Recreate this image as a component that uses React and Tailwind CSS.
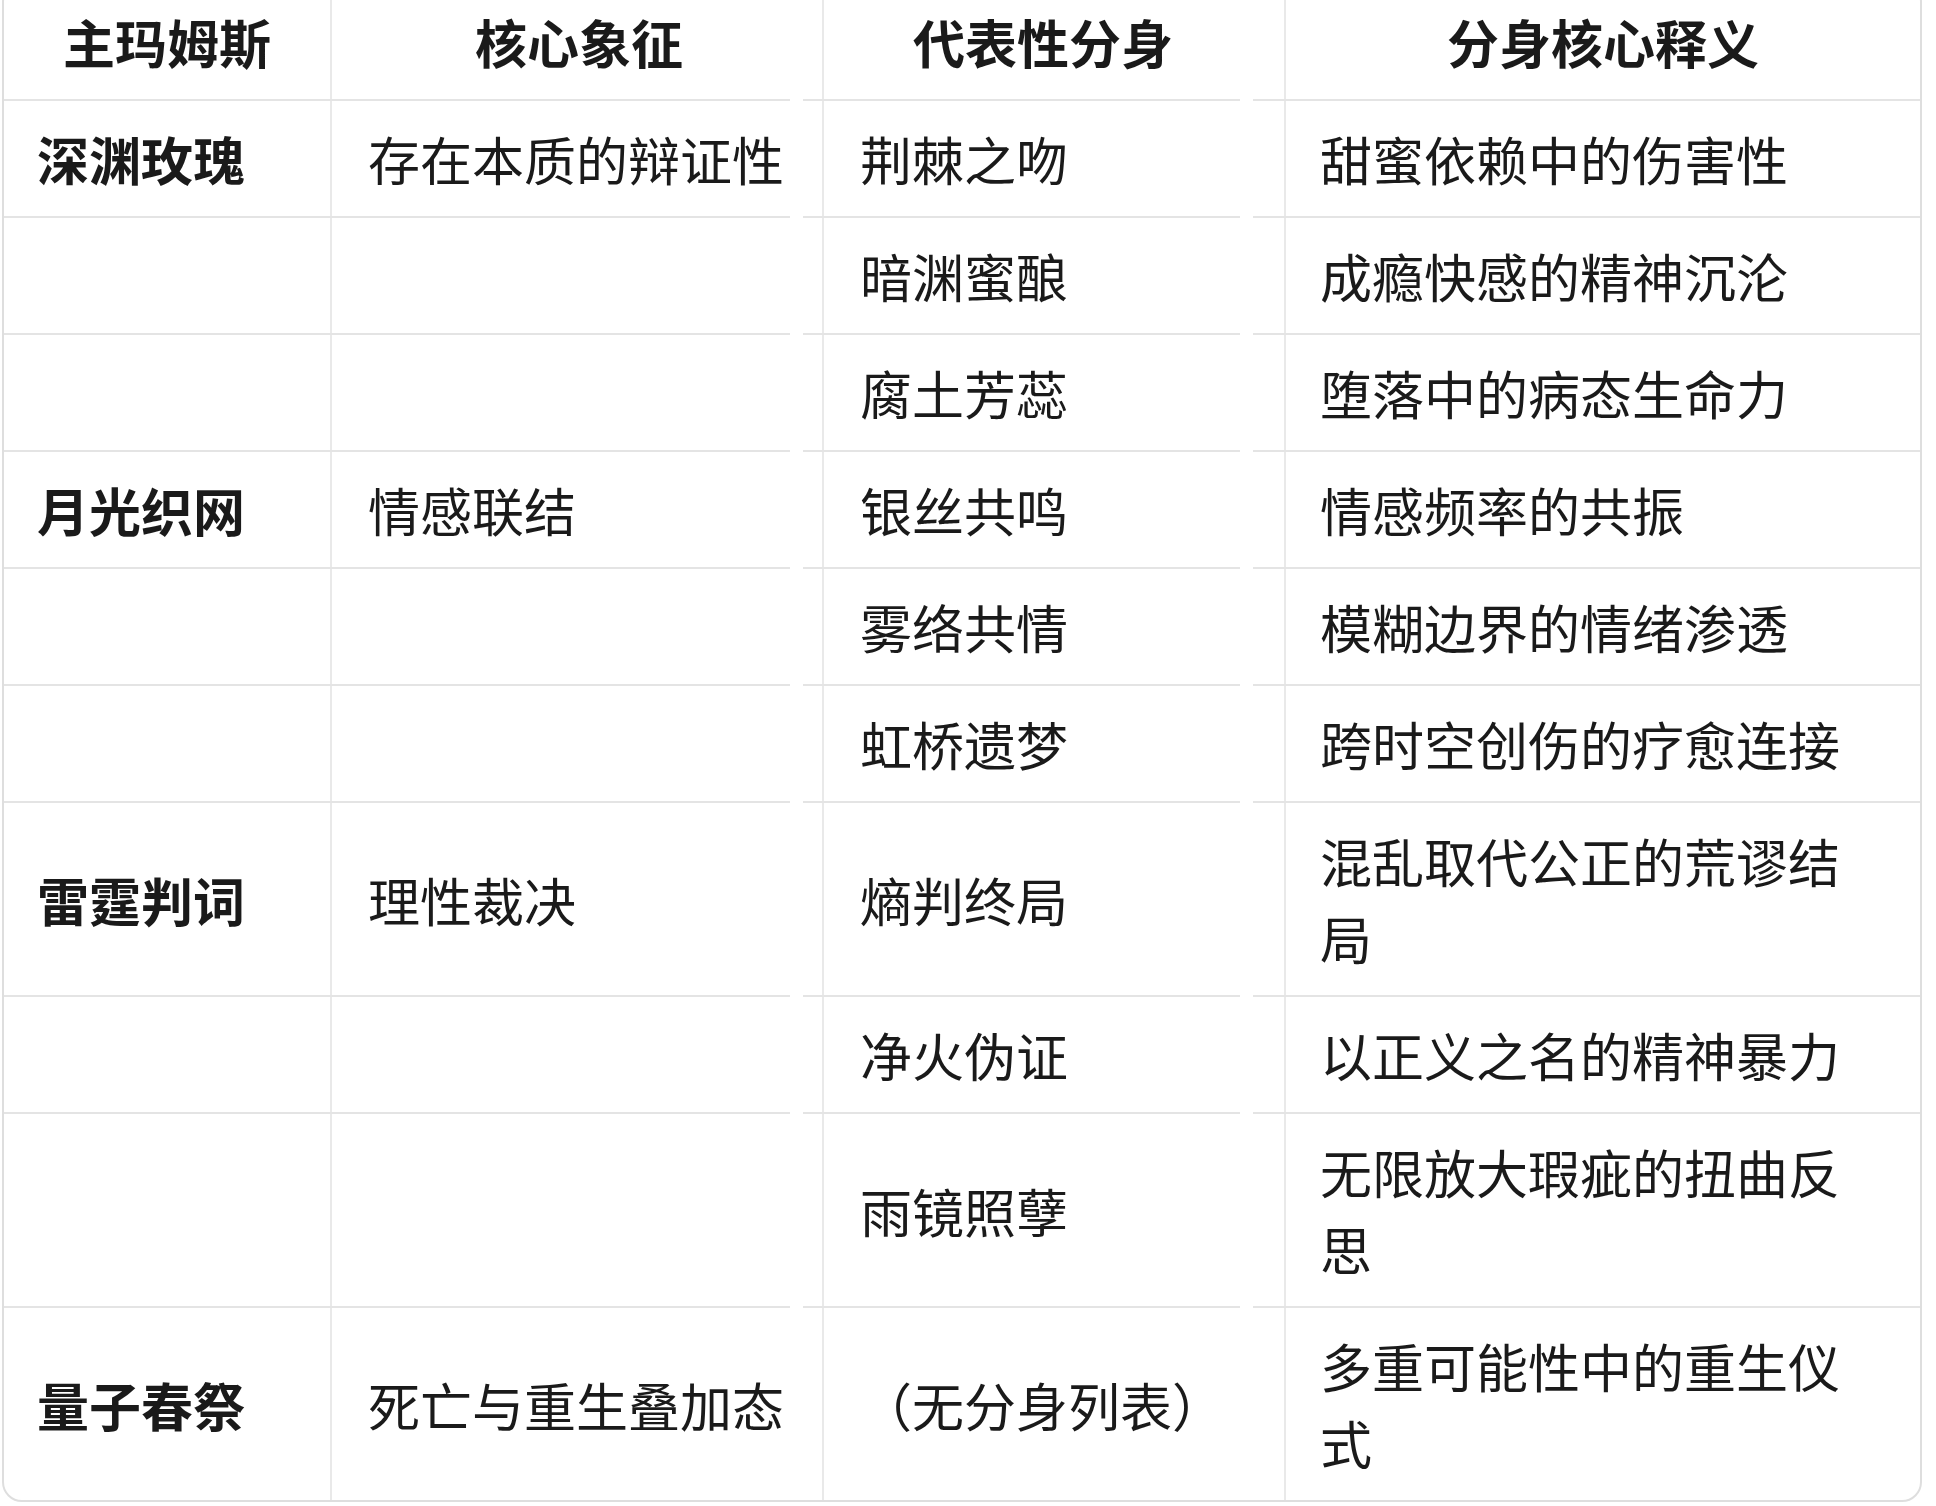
import React from 'react';

const rows = [
  ['深渊玫瑰', '存在本质的辩证性', '荆棘之吻', '甜蜜依赖中的伤害性'],
  ['', '', '暗渊蜜酿', '成瘾快感的精神沉沦'],
  ['', '', '腐土芳蕊', '堕落中的病态生命力'],
  ['月光织网', '情感联结', '银丝共鸣', '情感频率的共振'],
  ['', '', '雾络共情', '模糊边界的情绪渗透'],
  ['', '', '虹桥遗梦', '跨时空创伤的疗愈连接'],
  ['雷霆判词', '理性裁决', '熵判终局', '混乱取代公正的荒谬结局'],
  ['', '', '净火伪证', '以正义之名的精神暴力'],
  ['', '', '雨镜照孽', '无限放大瑕疵的扭曲反思'],
  ['量子春祭', '死亡与重生叠加态', '（无分身列表）', '多重可能性中的重生仪式'],
];

const headers = ['主玛姆斯', '核心象征', '代表性分身', '分身核心释义'];

const bodyPad = ['pl-[33px] pr-5 font-bold', 'pl-9 pr-5', 'pl-9 pr-5', 'pl-[34px] pr-[60px]'];
const headPad = ['px-4', 'pl-5 pr-4', 'pl-4 pr-[38px]', 'px-4'];

// the row rules break just before each column line, like the source
const Divider = () => (
  <div className="flex h-[2px] gap-[13px]">
    <div className="w-[786px] bg-[#e4e4e4]" />
    <div className="w-[437px] bg-[#e4e4e4]" />
    <div className="flex-1 bg-[#e4e4e4]" />
  </div>
);

const Row = ({ cells, header }) => (
  <div className="grid grid-cols-[328px_492px_462px_1fr]">
    {cells.map((text, i) => (
      <div
        key={i}
        className={
          'flex items-center py-[19px] leading-[77px] ' +
          (i < 3 ? 'border-r-2 border-[#e9e9e9] ' : '') +
          (header ? 'justify-center text-center font-bold ' + headPad[i] : bodyPad[i])
        }
      >
        <span>{text}</span>
      </div>
    ))}
  </div>
);

export default function App() {
  return (
    <div className="bg-white min-h-screen overflow-hidden">
      <div
        className="ml-[2px] -mt-[18px] w-[1920px] border-2 border-[#dedede] rounded-[20px] bg-white text-[52px] text-[#1a1a1a]"
        style={{ fontFamily: '"Noto Sans CJK SC", "Noto Sans", sans-serif' }}
      >
        <Row cells={headers} header />
        <Divider />
        {rows.map((r, i) => (
          <div key={i}>
            <Row cells={r} />
            {i < rows.length - 1 && <Divider />}
          </div>
        ))}
      </div>
    </div>
  );
}
